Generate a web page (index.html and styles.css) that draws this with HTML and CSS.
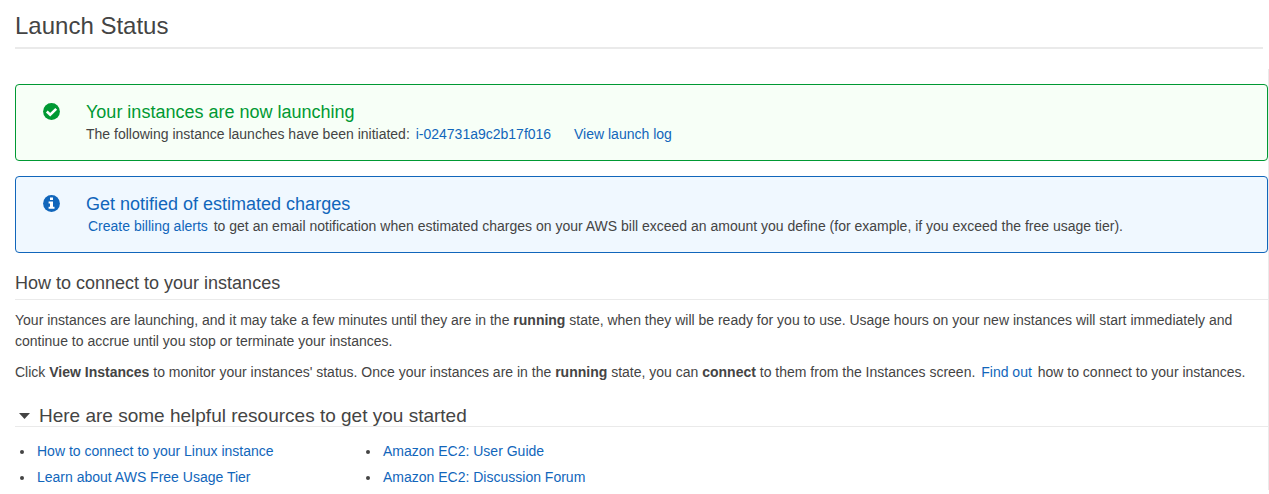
FILE: index.html
```html
<!DOCTYPE html>
<html lang="en">
<head>
<meta charset="utf-8">
<title>Launch Status</title>
<link rel="stylesheet" href="styles.css">
</head>
<body>
<header class="page-header">
  <h1 class="page-title">Launch Status</h1>
</header>
<main class="content">
  <section class="alert alert-success">
    <svg class="alert-icon" viewBox="0 0 17 17" aria-hidden="true">
      <circle cx="8.5" cy="8.5" r="8.4" fill="currentColor"/>
      <path d="M3.8 8.5 7.2 11.7 13.2 5.9" fill="none" stroke="#fff" stroke-width="2.6"/>
    </svg>
    <div class="alert-body">
      <h2 class="alert-title">Your instances are now launching</h2>
      <p class="alert-text">The following instance launches have been initiated: <a class="link" href="#">i-024731a9c2b17f016</a> <a class="link link-log" href="#">View launch log</a></p>
    </div>
  </section>
  <section class="alert alert-info">
    <svg class="alert-icon" viewBox="0 0 17 17" aria-hidden="true">
      <circle cx="8.5" cy="8.5" r="8.4" fill="currentColor"/>
      <path d="M7 2.4h3v2.5H7zM5.6 6.4H10v5.3h1.5v2.1H5.6v-2.1H7V8.4H5.6z" fill="#fff"/>
    </svg>
    <div class="alert-body">
      <h2 class="alert-title">Get notified of estimated charges</h2>
      <p class="alert-text"><a class="link" href="#">Create billing alerts</a> to get an email notification when estimated charges on your AWS bill exceed an amount you define (for example, if you exceed the free usage tier).</p>
    </div>
  </section>
  <section class="connect">
    <h2 class="section-title">How to connect to your instances</h2>
    <p class="paragraph">Your instances are launching, and it may take a few minutes until they are in the <b>running</b> state, when they will be ready for you to use. Usage hours on your new instances will start immediately and continue to accrue until you stop or terminate your instances.</p>
    <p class="paragraph">Click <b>View Instances</b> to monitor your instances' status. Once your instances are in the <b>running</b> state, you can <b>connect</b> to them from the Instances screen. <a class="link" href="#">Find out</a> how to connect to your instances.</p>
  </section>
  <details class="resources" open>
    <summary class="resources-title">
      <svg class="caret" viewBox="0 0 11 6" aria-hidden="true"><path d="M0 0h11L5.5 6z" fill="currentColor"/></svg>
      <span>Here are some helpful resources to get you started</span>
    </summary>
    <div class="resource-columns">
      <ul class="resource-list">
        <li><a href="#">How to connect to your Linux instance</a></li>
        <li><a href="#">Learn about AWS Free Usage Tier</a></li>
      </ul>
      <ul class="resource-list">
        <li><a href="#">Amazon EC2: User Guide</a></li>
        <li><a href="#">Amazon EC2: Discussion Forum</a></li>
      </ul>
    </div>
  </details>
</main>
</body>
</html>
```

FILE: styles.css
```css
* {
  box-sizing: border-box;
}

body {
  margin: 0;
  background: #fff;
  color: #444;
  font-family: "Liberation Sans", Arial, sans-serif;
  font-size: 14px;
  line-height: 21px;
}

h1, h2, p, ul {
  margin: 0;
  padding: 0;
  font-weight: normal;
}

a {
  color: #16b;
  text-decoration: none;
}

.page-header {
  margin: 0 6px 20px 15px;
  padding: 12px 0 7px;
  border-bottom: 2px solid #eaeaea;
}

.page-title {
  font-size: 24px;
  line-height: 28px;
}

.content {
  padding: 15px 0 0 15px;
  border-right: 1px solid #eaeaea;
}

.alert {
  display: flex;
  margin-bottom: 15px;
  padding: 16px 27px 15px;
  border: 1px solid currentColor;
  border-radius: 4px;
}

.alert-success {
  color: #093;
  background: #f7fff7;
}

.alert-info {
  color: #16b;
  background: #f0f8ff;
}

.alert-icon {
  flex: none;
  width: 17px;
  height: 17px;
  margin: 2px 26px 0 0;
}

.alert-title {
  margin-bottom: 1px;
  font-size: 18px;
  line-height: 22px;
}

.alert-text {
  color: #444;
}

.link {
  padding: 0 2px;
}

.link-log {
  margin-left: 15px;
}

.section-title {
  margin: 19px 0 10px;
  padding-bottom: 5px;
  border-bottom: 1px solid #eaeaea;
  font-size: 18px;
  line-height: 22px;
}

.paragraph {
  margin-bottom: 10px;
}

.resources {
  margin-top: 23px;
}

.resources-title {
  display: flex;
  align-items: center;
  gap: 9px;
  padding-left: 4px;
  border-bottom: 1px solid #eaeaea;
  font-size: 19px;
  line-height: 20px;
}

.caret {
  width: 11px;
  height: 6px;
}

.resource-columns {
  display: grid;
  grid-template-columns: 346px 1fr;
  margin-top: 11px;
}

.resource-list {
  padding-left: 20px;
  line-height: 26px;
}

.resource-list li {
  padding-left: 2px;
}
```
